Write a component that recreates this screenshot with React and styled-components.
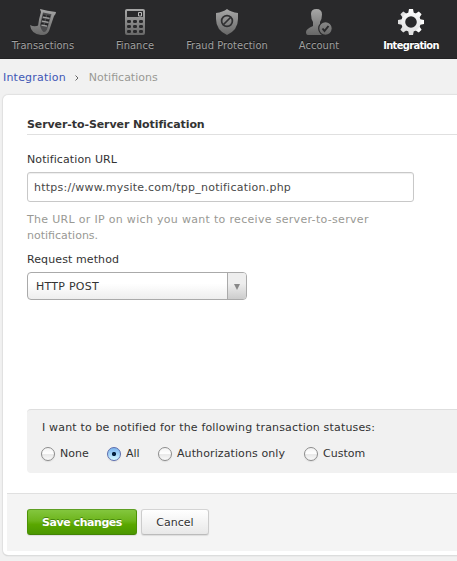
import React from 'react';
import styled, { createGlobalStyle } from 'styled-components';

const Global = createGlobalStyle`
  * { box-sizing: border-box; }
  html, body { margin: 0; background: #f1f1f1; overflow: hidden; }
  body { font: 11px/16px Verdana, "DejaVu Sans", sans-serif; color: #333; }
`;
const Page = styled.div`width: 457px; height: 561px; overflow: hidden; background: #f1f1f1;`;
const Nav = styled.nav`
  display: grid; grid-template-columns: 86px 98px 86px 98px 86px; height: 59px;
  background: #29292b; border-bottom: 1px solid #222224;
`;
const NavItem = styled.a`
  display: flex; flex-direction: column; align-items: center; padding-top: 8px; white-space: nowrap;
  font: ${p => (p.$active ? 'bold' : 'normal')} 11px/16px Tahoma, "DejaVu Sans Condensed", "DejaVu Sans", sans-serif;
  letter-spacing: ${p => (p.$active ? -0.65 : 0.06)}px;
  color: ${p => (p.$active ? '#fff' : '#a0a0a0')};
  text-shadow: 0 -1px 0 #111;
  svg { display: block; margin-bottom: 2px; }
`;
const Crumbs = styled.div`
  display: flex; align-items: center; height: 36px; padding: 2px 0 0 3px; color: #999994;
`;
const CrumbLink = styled.a`color: #3f57b5; letter-spacing: 0.2px;`;
const Crumb = styled.span`letter-spacing: 0;`;
const Chevron = styled.svg`margin: 0 10px 0 9px;`;
const Panel = styled.main`
  margin-left: 3px; width: 470px; height: 460px; background: #fff; border-radius: 5px;
  box-shadow: 0 0 1px 1px #e0e0e0, 0 1px 1px #b5b9b9;
  display: flex; flex-direction: column;
`;
const Content = styled.form`height: 398px; padding: 22px 0 0 24px; white-space: nowrap;`;
const Heading = styled.h2`
  margin: 0 0 17px; height: 18px; border-bottom: 1px solid #e0e0e0;
  font-size: 11px; line-height: 16px; letter-spacing: -0.09px;
`;
const Label = styled.label`display: block; margin-bottom: 4px; letter-spacing: 0.1px;`;
const Input = styled.input`
  display: block; width: 387px; height: 30px; padding: 0 6px; border: 1px solid #c8c8c8; border-radius: 3px;
  font: inherit; color: #484848; outline: 0; box-shadow: inset 0 1px 1px #eee; letter-spacing: 0.24px;
`;
const Help = styled.p`margin: 10px 0 8px; color: #999994;`;
const HelpLead = styled.span`letter-spacing: 0.31px;`;
const Select = styled.div`
  display: flex; justify-content: space-between; width: 220px; height: 28px; border: 1px solid #aaa;
  border-radius: 4px; overflow: hidden; line-height: 27px; padding-left: 8px;
  background: linear-gradient(#fff 40%, #eee); letter-spacing: 0.25px;
`;
const Arrow = styled.span`
  display: flex; align-items: center; justify-content: center; width: 19px; border-left: 1px solid #aaa;
  background: linear-gradient(#eee 40%, #ccc);
  svg { margin-top: 2px; }
`;
const Statuses = styled.section`
  margin-top: 109px; height: 64px; padding: 10px 0 0 15px; background: #f1f1f1;
  border-top: 1px solid #dedede; border-radius: 4px; letter-spacing: 0.165px;
`;
const Radios = styled.div`display: grid; grid-template-columns: 66px 51px 146px 80px; margin: 11px 0 0 -1px;`;
const Option = styled.label`
  display: flex; align-items: center; height: 14px; gap: 5px; line-height: 14px;
  letter-spacing: ${p => (p.$long ? 0.1 : 0)}px;
`;
const Dot = styled.i`
  width: 14px; height: 14px; border-radius: 50%; flex: none;
  border: 1px solid ${p => (p.$on ? '#5b6cad' : '#8c8c8c')};
  background: ${p => (p.$on
    ? 'radial-gradient(circle, #04203f 1.7px, transparent 2.5px), linear-gradient(#7db5ed, #a3d3f8 50%, #d5f8ff)'
    : 'linear-gradient(#f2f2f2, #fff 45%, #e8e8e8 55%, #fafafa)')};
  box-shadow: 0 1px 1px #ddd;
`;
const Footer = styled.footer`
  display: flex; gap: 4px; height: 58px; margin-left: 4px; padding: 15px 0 0 20px; background: #f4f4f4; border-top: 1px solid #e0e0e0;
`;
const Button = styled.button`
  height: 26px; width: ${p => (p.$primary ? 110 : 68)}px; padding: 1px 0 0; border-radius: 3px; white-space: nowrap;
  font: ${p => (p.$primary ? 'bold' : 'normal')} 11px/22px Verdana, "DejaVu Sans", sans-serif;
  color: ${p => (p.$primary ? '#fff' : '#333')};
  border: 1px solid; border-color: ${p => (p.$primary ? '#5f9f24 #4c9205 #438204' : '#d4d4d4 #ccc #bbb')};
  background: ${p => (p.$primary ? 'linear-gradient(#83c63e, #6db51c 45%, #5aa700 60%, #4b9700)' : 'linear-gradient(#fff, #e8e8e8)')};
  text-shadow: ${p => (p.$primary ? '0 -1px 0 #47860e' : '0 1px 0 #fff')};
  box-shadow: 0 1px 1px #ddd; letter-spacing: ${p => (p.$primary ? -0.45 : 0)}px;
`;

const Svg = ({ id, from = '#aaa', to = '#656565', children }) => (
  <svg width="28" height="28" viewBox="0 0 28 28" fill={`url(#${id})`}>
    <defs><linearGradient id={id} x1="0" y1="0" x2="0" y2="28" gradientUnits="userSpaceOnUse">
      <stop stopColor={from} /><stop offset="1" stopColor={to} />
    </linearGradient></defs>
    {children}
  </svg>
);
const Receipt = () => (
  <Svg id="receipt">
    <path d="M11 1Q18 3 27 4Q27 6 25 8L20 23Q18 27 13.500 27Q10 24 9 18Q10 10 12 4Z" />
    <path d="M14 4.500l8.500 1.700L18 21.500q-1.500 3-3.500 2.500Q12 22 11 17Z" fill="#4c4c4e" />
    <path d="M14 7.500l2.500.4M18 8.300l3 .5M13 11.500l2.500.4M17 12.300l3 .5M12 15.500l2.500.4M16 16.300l3 .5" stroke="#222224" strokeWidth="2" fill="none" />
    <path d="M14 9.200l6.500 1.200M13 13.200l6.500 1.200M12.500 17.200l5.500 1" stroke="#a0a0a0" strokeWidth="1.300" fill="none" />
    <path d="M1 17Q6 19.500 10 17Q10 22 13 24Q14.500 25 16 24Q15 27 12 27Q2 26 1 17Z" />
  </Svg>
);
const Calculator = () => (
  <Svg id="calc">
    <rect x="4" y="1" width="20" height="26" rx="2" />
    <path d="M6 3h16v6H6z" fill="#29292b" />
    <path d="M17.500 4.500h3v3.500h-3z" fill="none" stroke="#bbb" />
    {[12, 17, 22].map(y => [6, 12, 18].map(x => <rect key={`${x}-${y}`} x={x} y={y} width="4" height="3" rx="1.3" fill="#29292b" />))}
  </Svg>
);
const Shield = () => (
  <Svg id="shield">
    <path d="M14 1Q18 4 25 5V11Q25 22 14 27Q3 22 3 11V5Q10 4 14 1Z" />
    <g fill="none" stroke="#303032" strokeWidth="1.7"><circle cx="14" cy="13" r="5.400" /><path d="M10.500 16.500l7-7" /></g>
  </Svg>
);
const Account = () => (
  <Svg id="account">
    <path d="M6 6Q6 1 11.500 1Q17 1 17 6.500Q17 11 15 14V17Q16 19 20 20V27H3Q1 27 1 24Q1 21 8 18V14Q6 11 6 6Z" />
    <circle cx="20.500" cy="20.500" r="6.800" stroke="#29292b" strokeWidth="1.200" />
    <path d="M17.500 20.500l2 2.500 4-5" fill="none" stroke="#29292b" strokeWidth="2" />
  </Svg>
);
const Gear = () => (
  <Svg id="gear" from="#fff" to="#ddd">
    {[0, 45, 90, 135].map(a => <path key={a} d="M12 1h4l1 5H11zM11 22h6l-1 5h-4z" transform={`rotate(${a} 14 14)`} />)}
    <path fillRule="evenodd" d="M14 4.200a9.800 9.800 0 1 0 0 19.600a9.800 9.800 0 1 0 0-19.600M14 8.200a5.800 5.800 0 1 1 0 11.600a5.800 5.800 0 1 1 0-11.600" />
  </Svg>
);

const items = [['Transactions', Receipt], ['Finance', Calculator], ['Fraud Protection', Shield], ['Account', Account], ['Integration', Gear]];
const options = ['None', 'All', 'Authorizations only', 'Custom'];

export default function App() {
  return (
    <Page>
      <Global />
      <Nav>{items.map(([name, Icon], i) => <NavItem key={name} $active={i === 4}><Icon />{name}</NavItem>)}</Nav>
      <Crumbs>
        <CrumbLink>Integration</CrumbLink>
        <Chevron width="4" height="6" viewBox="0 0 4 6"><path d="M.5 .5L3 3L.5 5.500" fill="none" stroke="#666" /></Chevron>
        <Crumb>Notifications</Crumb>
      </Crumbs>
      <Panel>
        <Content>
          <Heading>Server-to-Server Notification</Heading>
          <Label>Notification URL</Label>
          <Input defaultValue="https://www.mysite.com/tpp_notification.php" />
          <Help><HelpLead>The URL or IP on wich you want to receive server-to-server</HelpLead><br />notifications.</Help>
          <Label>Request method</Label>
          <Select>HTTP POST<Arrow><svg width="6" height="6"><path d="M0 0h6L3 6z" fill="#888" /></svg></Arrow></Select>
          <Statuses>
            I want to be notified for the following transaction statuses:
            <Radios>{options.map(o => <Option key={o} $long={o.length > 8}><Dot $on={o === 'All'} />{o}</Option>)}</Radios>
          </Statuses>
        </Content>
        <Footer><Button type="button" $primary>Save changes</Button><Button type="button">Cancel</Button></Footer>
      </Panel>
    </Page>
  );
}
